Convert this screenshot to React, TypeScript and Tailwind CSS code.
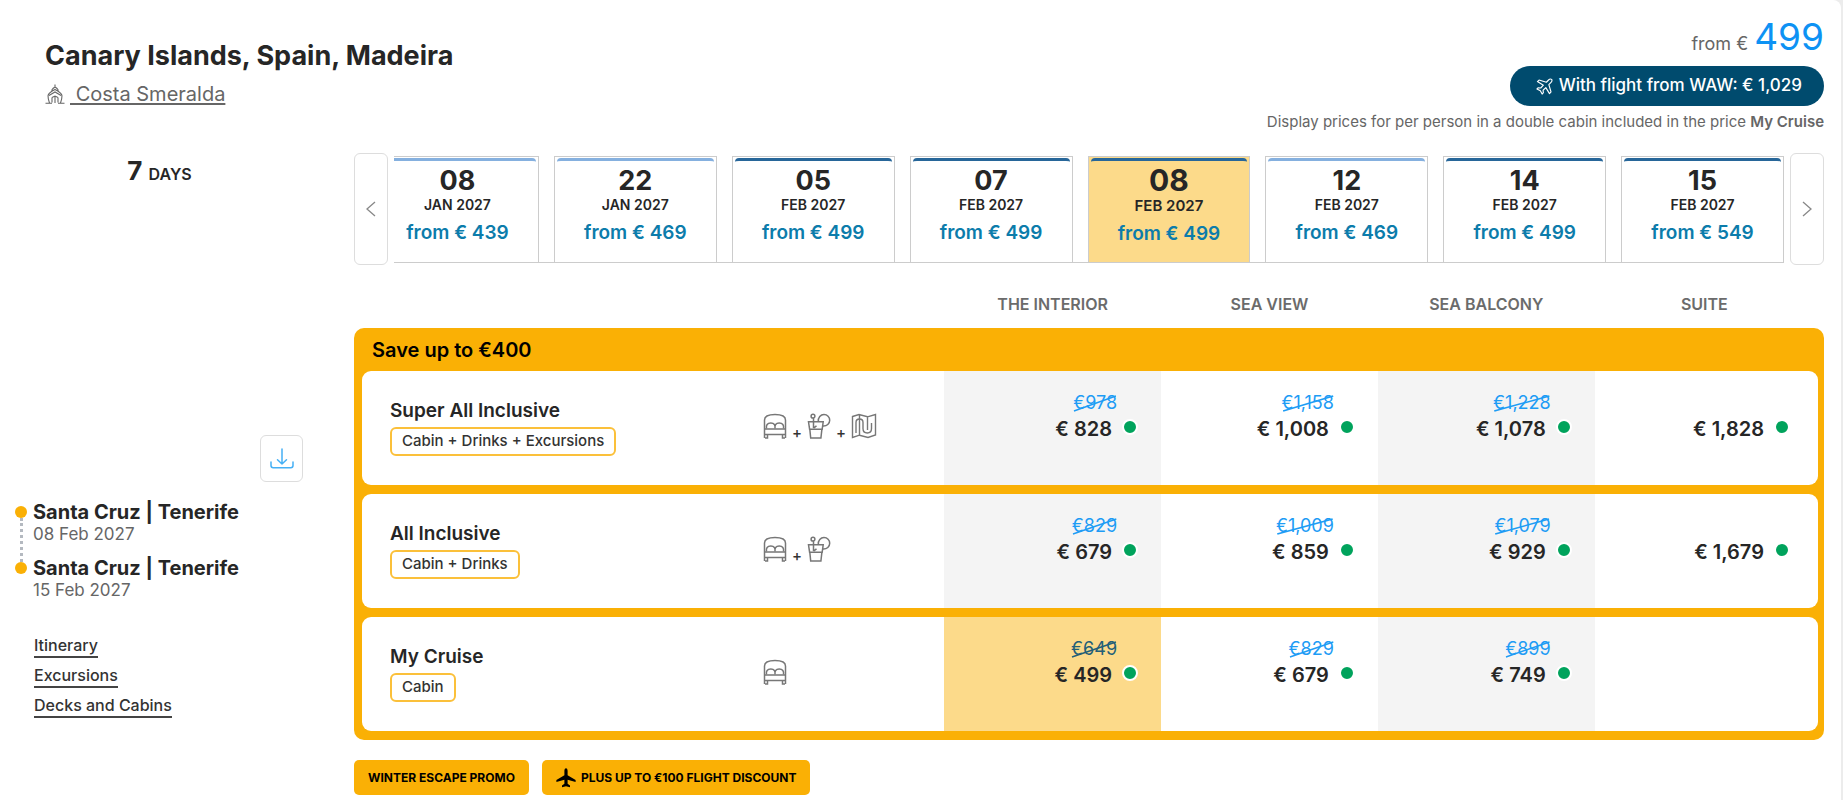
import React from "react";

type Sailing = { day: string; month: string; price: string; light?: boolean; selected?: boolean };
type Fare = { old?: string; price: string } | null;
type Offer = { name: string; includes: string; icons: ("cabin" | "drinks" | "excursions")[]; fares: Fare[] };

const sailings: Sailing[] = [
  { day: "08", month: "JAN 2027", price: "439", light: true },
  { day: "22", month: "JAN 2027", price: "469", light: true },
  { day: "05", month: "FEB 2027", price: "499" },
  { day: "07", month: "FEB 2027", price: "499" },
  { day: "08", month: "FEB 2027", price: "499", selected: true },
  { day: "12", month: "FEB 2027", price: "469", light: true },
  { day: "14", month: "FEB 2027", price: "499" },
  { day: "15", month: "FEB 2027", price: "549" },
];

const offers: Offer[] = [
  {
    name: "Super All Inclusive",
    includes: "Cabin + Drinks + Excursions",
    icons: ["cabin", "drinks", "excursions"],
    fares: [
      { old: "978", price: "828" },
      { old: "1,158", price: "1,008" },
      { old: "1,228", price: "1,078" },
      { price: "1,828" },
    ],
  },
  {
    name: "All Inclusive",
    includes: "Cabin + Drinks",
    icons: ["cabin", "drinks"],
    fares: [
      { old: "829", price: "679" },
      { old: "1,009", price: "859" },
      { old: "1,079", price: "929" },
      { price: "1,679" },
    ],
  },
  {
    name: "My Cruise",
    includes: "Cabin",
    icons: ["cabin"],
    fares: [{ old: "649", price: "499" }, { old: "829", price: "679" }, { old: "899", price: "749" }, null],
  },
];

function ShipIcon() {
  return (
    <svg viewBox="0 0 20 20" className="h-5 w-5" fill="none" stroke="#666" strokeWidth="1.1" aria-hidden="true">
      <path d="M10 .5v3M6.500 6.500 8 4.500 10 3l2 1.500 1.500 2M3 11.500C3.500 9.500 6 7.500 10 5.500c4 2 6.500 4 7 6M3 11.500c0 3 .5 5 1.500 7.500M17 11.500c0 3-.5 5-1.500 7.500M4 11.500 10 8l6 3.500M10 12v7M7 13.500v5M13 13.500v5M7 13.500l3-1.500 3 1.500M.5 19.300H7M13 19.300h6.500" />
    </svg>
  );
}

function FlightOutlineIcon() {
  return (
    <svg viewBox="0 0 18 18" className="h-[17px] w-[17px]" fill="none" stroke="#fff" strokeWidth="1.2" strokeLinejoin="round" aria-hidden="true">
      <path d="M16.500 1.500c-1-.8-2.300-.3-3.200.6L11 4.500 3.200 2.200 1.500 3.800 7.800 7.600 5 10.600l-2.600-.3L1 11.600l3.600 1.900 1.900 3.500 1.300-1.400-.3-2.600 2.900-2.800 3.900 6.300 1.600-1.700L13.600 7l2.300-2.300c.9-.9 1.400-2.400.6-3.200z" />
    </svg>
  );
}

function PlaneIcon() {
  return (
    <svg viewBox="0 0 20 20" className="h-5 w-5" fill="#000" aria-hidden="true">
      <path d="M10 .3c1 0 1.600 1.200 1.600 2.700v4.300l8 4.600v2.100l-8-2.300v4l2.400 1.900v1.700L10 18.200l-4 1.100v-1.700l2.400-1.900v-4l-8 2.300v-2.100l8-4.600V3C8.400 1.500 9 .3 10 .3z" />
    </svg>
  );
}

function CabinIcon() {
  return (
    <svg viewBox="0 0 24 26" className="h-[26px] w-6" fill="none" stroke="#777" strokeWidth="1.500" aria-hidden="true">
      <path d="M1.500 25V7c0-3.500 4-5.500 10.500-5.500S22.500 3.500 22.500 7v18M1.500 16h21M1.500 21.500h21M2 25h2.500v-3.500M22 25h-2.500v-3.500" />
      <path d="M3.500 15.500c-.6-3.500.8-5.500 4.300-5.500s4.700 2 4.200 5.500M12 15.500c-.5-3.500.8-5.500 4.200-5.500s4.900 2 4.300 5.500" />
    </svg>
  );
}

function DrinksIcon() {
  return (
    <svg viewBox="0 0 24 26" className="h-[26px] w-6" fill="none" stroke="#777" strokeWidth="1.500" aria-hidden="true">
      <path d="M1.500 8.800h14.700l-1 7.400H2.600L1.500 8.800zM2.800 16.200l.9 8.800h10.200l1-8.800" />
      <path d="M6.500 5v10M6.500 15.200l3-2.400" />
      <circle cx="6" cy="3.200" r="1.900" />
      <path d="M11.300 8.500c-.3-4 2.300-7 5.700-7 3.300 0 5.700 2.600 5.700 5.700 0 3.400-2.800 6.200-6.700 5.900" />
    </svg>
  );
}

function ExcursionsIcon() {
  return (
    <svg viewBox="0 0 26 26" className="h-[26px] w-[26px]" fill="none" stroke="#777" strokeWidth="1.400" aria-hidden="true">
      <path d="M1.500 3.500 8 1.500l8.500 2.300L24.500 1.500V22L17 24.500l-8.500-2.300-7 2.300V3.500zM8.500 2v20M16.500 4v13" />
      <path d="M5 20V9.500C5 7.500 6.500 6 8.500 6s3.500 1.500 3.500 3.500v6c0 2.700 1.700 4.500 4.300 4.500s4.200-1.800 4.200-4.500V10" />
    </svg>
  );
}

function DownloadIcon() {
  return (
    <svg viewBox="0 0 24 22" className="h-[22px] w-6" fill="none" stroke="#45b0f5" strokeWidth="1.500" strokeLinecap="round" strokeLinejoin="round" aria-hidden="true">
      <path d="M12 1v15M7.500 11.800 12 16l4.500-4.200M1 14v3.500c0 1.500.8 2.200 2.200 2.200h17.600c1.400 0 2.200-.7 2.200-2.200V14" />
    </svg>
  );
}

function Chevron({ right }: { right?: boolean }) {
  return (
    <svg viewBox="0 0 10 16" className="h-4 w-[10px]" fill="none" stroke="#888" strokeWidth="1.300" aria-hidden="true">
      <path d={right ? "M1 1l8 7-8 7" : "M9 1 1 8l8 7"} />
    </svg>
  );
}

const includeIcon = { cabin: CabinIcon, drinks: DrinksIcon, excursions: ExcursionsIcon };

function SailingCard({ day, month, price, light, selected }: Sailing) {
  return (
    <button
      type="button"
      aria-pressed={!!selected}
      className={`flex h-[106px] min-w-0 flex-col items-center border border-b-0 border-[#ccc] px-[2px] pt-px ${selected ? "bg-[#fcda8a]" : "bg-white"}`}
    >
      <span className={`h-[5px] w-full shrink-0 rounded-t border-t-[3px] ${light ? "border-[#85b0df]" : "border-[#276699]"}`} />
      <span className={`font-bold text-[#262626] ${selected ? "mt-px text-[30px] leading-[33px]" : "mt-[3px] text-[27px] leading-[30px]"}`}>{day}</span>
      <span className={`leading-[18px] font-semibold text-[#262626] ${selected ? "text-[15px]" : "text-[14px]"}`}>{month}</span>
      <span className="mt-[7px] text-[19px] leading-[24px] font-semibold text-[#0c7cab]">from € {price}</span>
    </button>
  );
}

function FareCell({ fare, selected }: { fare: Fare; selected: boolean }) {
  if (!fare) return null;
  return (
    <div className="flex flex-col items-end pt-[22px]">
      {fare.old ? (
        <s className={`relative mr-[21px] text-[18px] leading-[20px] no-underline ${selected ? "text-[#235f78]" : "text-[#1e9cf5]"}`}>
          €{fare.old}
          <svg viewBox="0 0 46 18" preserveAspectRatio="none" className="absolute inset-x-0 top-px h-[18px] w-full" stroke="currentColor" strokeWidth="1.400" aria-hidden="true">
            <path d="M1 17 45 2" />
          </svg>
        </s>
      ) : (
        <span className="h-5" />
      )}
      <span className="mt-[3px] flex items-center gap-[10px] text-[20px] leading-[26px] font-semibold text-[#262626]">
        € {fare.price}
        <span className="mb-1 h-4 w-4 rounded-full border-2 border-white bg-[#00a35c]" />
      </span>
    </div>
  );
}

export default function App() {
  return (
    <div className="min-h-screen bg-[#ececec] pr-[2px] font-['Inter','Liberation_Sans',sans-serif]">
      <main className="min-h-screen rounded-tr-lg bg-white pr-[17px]">
        <header className="flex justify-between pl-[45px]">
          <div className="pt-[40px]">
            <h1 className="text-[27px] leading-[32px] font-bold text-[#262626]">Canary Islands, Spain, Madeira</h1>
            <div className="mt-[9px] flex items-center gap-[5px] text-[20px] leading-[26px] text-[#666]">
              <ShipIcon />
              <a href="#ship" className="whitespace-pre underline underline-offset-2">{" Costa Smeralda"}</a>
            </div>
          </div>
          <div className="flex flex-col items-end pt-[16px]">
            <p className="flex items-baseline gap-[6px] leading-[42px] text-[#666]">
              <span className="text-[18px]">from €</span>
              <span className="text-[37px] text-[#0d92f4]">499</span>
            </p>
            <a href="#flight" className="mt-px flex h-10 items-center gap-[6px] rounded-full bg-[#004b6e] pr-[22px] pl-[26px] text-[17px] font-medium text-white">
              <FlightOutlineIcon />
              With flight from WAW: € 1,029
            </a>
            <p className="mt-[6px] text-[15px] leading-[20px] text-[#666]">
              Display prices for per person in a double cabin included in the price <strong className="font-semibold">My Cruise</strong>
            </p>
          </div>
        </header>

        <div className="mt-[21px] flex">
          <aside className="w-[354px] shrink-0 pl-[15px]">
            <p className="w-[289px] pt-[4px] text-center text-[26px] leading-[28px] font-bold text-[#262626]">
              7 <span className="text-[16px] font-semibold">DAYS</span>
            </p>
            <div className="mt-[247px] flex w-[288px] justify-end">
              <button type="button" aria-label="Download itinerary" className="grid h-[47px] w-[43px] place-items-center rounded-md border border-[#ddd] bg-white">
                <DownloadIcon />
              </button>
            </div>
            <ol className="mt-[19px]">
              {["08 Feb 2027", "15 Feb 2027"].map((date, i) => (
                <li key={date} className="flex h-[56px] gap-[6px]">
                  <span className="flex w-3 flex-col items-center pt-[5px]">
                    <span className="h-3 w-3 shrink-0 rounded-full bg-[#fab005]" />
                    {i === 0 && <span className="-mb-[5px] w-0 flex-1 border-l-[3px] border-dotted border-[#b4b9c0]" />}
                  </span>
                  <div className="whitespace-nowrap">
                    <p className="text-[20px] leading-[22px] font-bold text-[#262626]">Santa Cruz | Tenerife</p>
                    <p className="text-[17px] leading-[22px] text-[#666]">{date}</p>
                  </div>
                </li>
              ))}
            </ol>
            <nav className="mt-[21px] flex flex-col items-start gap-[6px] pl-[19px] text-[16px] leading-[22px] font-medium text-[#333]">
              <a href="#itinerary" className="border-b-2 border-[#444]">Itinerary</a>
              <a href="#excursions" className="border-b-2 border-[#444]">Excursions</a>
              <a href="#decks" className="border-b-2 border-[#444]">Decks and Cabins</a>
            </nav>
          </aside>

          <section className="min-w-0 flex-1">
            <div className="flex items-center">
              <button type="button" aria-label="Previous dates" className="grid h-[112px] w-[34px] shrink-0 place-items-center rounded-md border border-[#ddd]">
                <Chevron />
              </button>
              <div className="mx-[6px] min-w-0 flex-1 overflow-hidden border-b border-[#ccc]">
                <div className="-ml-[18px] grid grid-cols-8 gap-[15px]">
                  {sailings.map((s) => (
                    <SailingCard key={s.month + s.day} {...s} />
                  ))}
                </div>
              </div>
              <button type="button" aria-label="Next dates" className="grid h-[112px] w-[34px] shrink-0 place-items-center rounded-md border border-[#ddd]">
                <Chevron right />
              </button>
            </div>

            <div className="overflow-hidden rounded-b-[10px]">
              <table className="w-full table-fixed border-separate border-spacing-0">
                <colgroup>
                  <col className="w-[27%]" />
                  <col />
                  <col className="w-[14.75%]" />
                  <col className="w-[14.75%]" />
                  <col className="w-[14.75%]" />
                  <col className="w-[15.6%]" />
                </colgroup>
                <thead>
                  <tr className="h-[63px] text-[16px] leading-[22px] font-semibold text-[#6b6b6b]">
                    <td />
                    <td />
                    <th scope="col" className="pt-[14px] font-semibold">THE INTERIOR</th>
                    <th scope="col" className="pt-[14px] font-semibold">SEA VIEW</th>
                    <th scope="col" className="pt-[14px] font-semibold">SEA BALCONY</th>
                    <th scope="col" className="pt-[14px] pr-[10px] font-semibold">SUITE</th>
                  </tr>
                </thead>
                <tbody>
                  <tr>
                    <th colSpan={6} scope="colgroup" className="h-[43px] rounded-t-[10px] bg-[#fab005] pl-[18px] text-left text-[20px] font-semibold text-black">
                      Save up to €400
                    </th>
                  </tr>
                  {offers.map((offer, row) => (
                    <tr key={offer.name}>
                      <th scope="row" className="bg-[#fab005] pb-[9px] pl-2 text-left align-top font-normal">
                        <div className="h-[114px] rounded-l-[9px] bg-white pt-[28px] pl-[28px]">
                          <div className="text-[19px] leading-[24px] font-semibold text-[#262626]">{offer.name}</div>
                          <div className="mt-1 inline-flex h-[29px] items-center rounded-md border-2 border-[#fbc03a] px-[10px] text-[15px] font-medium text-[#333]">{offer.includes}</div>
                        </div>
                      </th>
                      <td className="bg-[#fab005] pb-[9px] align-top">
                        <div className="flex h-[114px] items-start gap-[5px] bg-white pt-[42px] pl-[12px] text-[15px] leading-[40px] font-medium text-[#333]">
                          {offer.icons.map((name, i) => {
                            const Icon = includeIcon[name];
                            return (
                              <React.Fragment key={name}>
                                {i > 0 && <span>+</span>}
                                <Icon />
                              </React.Fragment>
                            );
                          })}
                        </div>
                      </td>
                      {offer.fares.map((fare, col) => {
                        const selected = row === 2 && col === 0;
                        const last = col === 3;
                        const tone = selected ? "bg-[#fcda8a]" : col % 2 === 0 ? "bg-[#f4f4f4]" : "bg-white";
                        return (
                          <td key={col} className={`bg-[#fab005] pb-[9px] align-top ${last ? "pr-[6px]" : ""}`}>
                            <div className={`h-[114px] ${tone} ${last ? "rounded-r-[9px] pr-[28px]" : "pr-[23px]"}`}>
                              <FareCell fare={fare} selected={selected} />
                            </div>
                          </td>
                        );
                      })}
                    </tr>
                  ))}
                </tbody>
              </table>
            </div>

            <div className="mt-[20px] flex gap-[13px] text-[12px] font-bold text-black">
              <span className="flex h-[35px] items-center rounded-[5px] bg-[#fab005] px-[14px]">WINTER ESCAPE PROMO</span>
              <span className="flex h-[35px] items-center gap-[5px] rounded-[5px] bg-[#fab005] px-[14px]">
                <PlaneIcon />
                PLUS UP TO €100 FLIGHT DISCOUNT
              </span>
            </div>
          </section>
        </div>
      </main>
    </div>
  );
}
